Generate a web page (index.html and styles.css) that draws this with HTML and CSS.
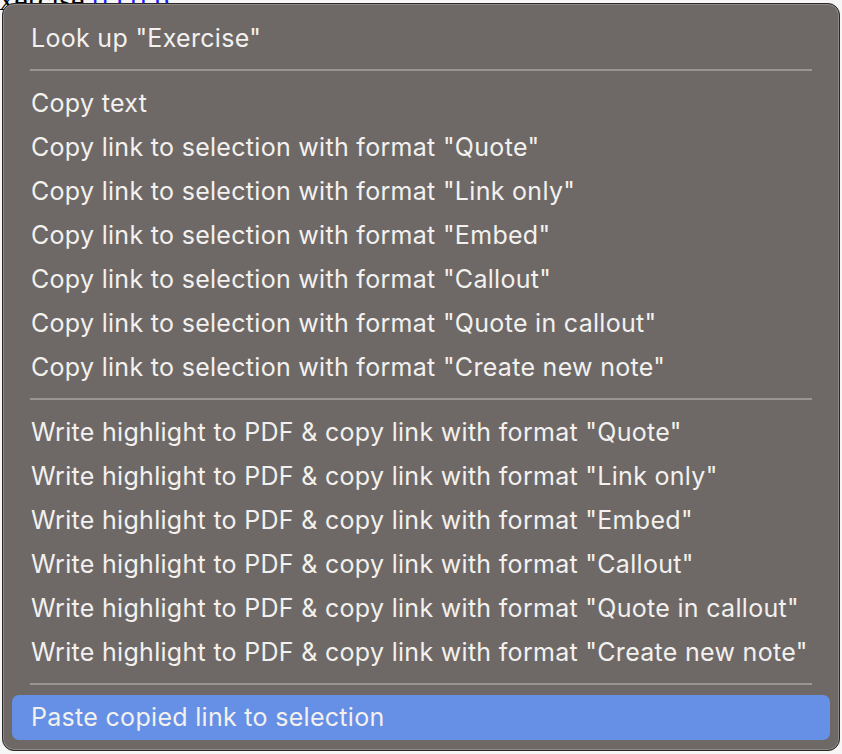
FILE: index.html
```html
<!DOCTYPE html>
<html>
<head>
<meta charset="utf-8">
<link rel="stylesheet" href="styles.css">
</head>
<body>
<div class="page-text">Exercise <a class="link" href="#">[[1]] b</a></div>
<div class="menu">
  <div class="item">Look up "Exercise"</div>
  <div class="sep"></div>
  <div class="item">Copy text</div>
  <div class="item">Copy link to selection with format "Quote"</div>
  <div class="item">Copy link to selection with format "Link only"</div>
  <div class="item">Copy link to selection with format "Embed"</div>
  <div class="item">Copy link to selection with format "Callout"</div>
  <div class="item">Copy link to selection with format "Quote in callout"</div>
  <div class="item">Copy link to selection with format "Create new note"</div>
  <div class="sep"></div>
  <div class="item">Write highlight to PDF &amp; copy link with format "Quote"</div>
  <div class="item">Write highlight to PDF &amp; copy link with format "Link only"</div>
  <div class="item">Write highlight to PDF &amp; copy link with format "Embed"</div>
  <div class="item">Write highlight to PDF &amp; copy link with format "Callout"</div>
  <div class="item">Write highlight to PDF &amp; copy link with format "Quote in callout"</div>
  <div class="item">Write highlight to PDF &amp; copy link with format "Create new note"</div>
  <div class="sep"></div>
  <div class="item active">Paste copied link to selection</div>
</div>
</body>
</html>
```
FILE: styles.css
```css
html, body {
  margin: 0;
  padding: 0;
  background: #f6f6f6;
  width: 842px;
  height: 754px;
  overflow: hidden;
}
.page-text {
  position: absolute;
  left: -19px;
  top: -17px;
  font-family: "Liberation Serif", serif;
  font-size: 30px;
  color: #000;
}
.link {
  color: #1a1aff;
  text-decoration: underline;
}
.menu {
  position: absolute;
  left: 2px;
  top: 3px;
  width: 838px;
  height: 748px;
  box-sizing: border-box;
  background: #6e6966;
  border: 1px solid #2a2726;
  box-shadow: inset 0 0 0 1px #8e8986;
  border-radius: 12px;
  padding: 12px 9px 10px 9px;
  font-family: "Inter", "Noto Sans", sans-serif;
  font-size: 25px;
  letter-spacing: 0.3px;
  color: #f3f1ef;
}
.item {
  height: 44px;
  line-height: 45px;
  padding-left: 19px;
  border-radius: 7px;
  white-space: nowrap;
}
.item.active {
  height: 45px;
  background: #6590e5;
}
.sep {
  height: 2px;
  background: #9a9592;
  margin: 9px 18px 10px 18px;
}
```
